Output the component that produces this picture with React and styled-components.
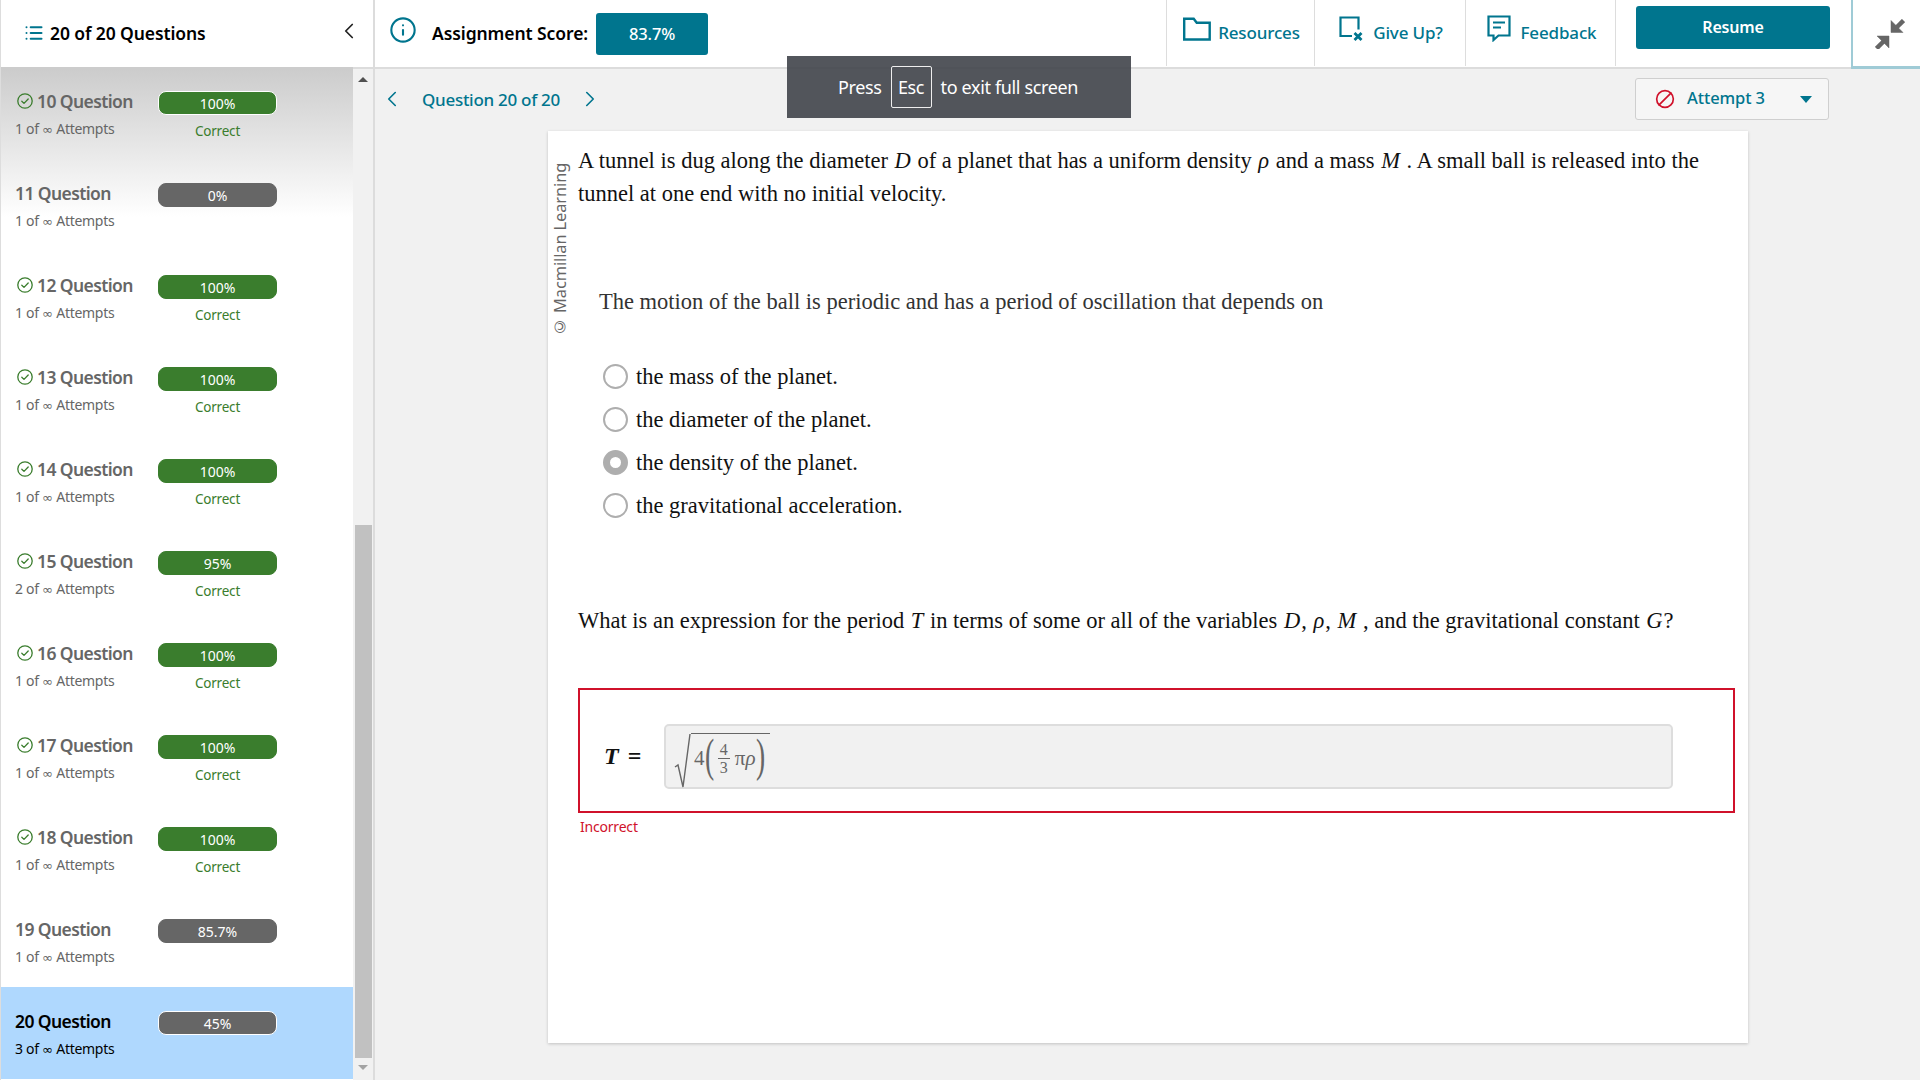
import React from 'react';
import styled, { createGlobalStyle } from 'styled-components';
import { ChevronLeft, ChevronRight, Info, List, Ban } from 'lucide-react';

const teal = '#00758e';
const ui = '"Noto Sans", "Open Sans", sans-serif';
const serif = '"Liberation Serif", "Times New Roman", serif';

const Global = createGlobalStyle`
  html, body { margin: 0; padding: 0; background: #f1f1f1; }
  body { font-family: ${ui}; }
  * { box-sizing: border-box; }
`;

const Page = styled.div`
  width: 1920px; height: 1080px; display: flex; flex-direction: column;
  overflow: hidden; position: relative; background: #f1f1f1;
`;
const TopBar = styled.header`
  height: 69px; flex: none; display: flex; background: #fff; border-bottom: 2px solid #dcdcdc;
`;
const SideHead = styled.div`
  width: 375px; flex: none; display: flex; align-items: center; padding: 0 11px 2px 23px;
  border-left: 1px solid #ddd; border-right: 2px solid #dcdcdc;
  color: #000; font-size: 17.5px; font-weight: 600; letter-spacing: -0.1px;
  svg { color: ${teal}; margin-right: 6px; }
`;
const CollapseIcon = styled(ChevronLeft)`
  && { color: #222; margin: -4px 0 0 auto; }
`;
const ScoreArea = styled.div`
  display: flex; align-items: center; padding: 0 0 2px 14px; flex: 1;
  font-size: 17.5px; font-weight: 600; letter-spacing: -0.08px; color: #000;
`;
const InfoIcon = styled(Info)`
  color: ${teal}; margin: -5px 15px 0 0;
`;
const ScoreBadge = styled.div`
  width: 112px; height: 42px; margin: 2px 0 0 8px; border-radius: 3px; background: ${teal}; color: #fff;
  display: flex; align-items: center; justify-content: center; font-size: 16.5px; font-weight: 500;
`;
const Action = styled.div`
  height: 66px; display: flex; align-items: center; gap: ${p => p.$gap || 7}px; justify-content: center;
  width: ${p => p.$w}px; border-left: 1px solid #ddd; color: ${teal}; padding: 0 0 2px 2px;
  font-size: 17px; font-weight: 500; letter-spacing: -0.15px;
`;
const ResumeWrap = styled.div`
  width: 236px; height: 66px; display: flex; flex: none; border-left: 1px solid #ddd; padding: 6px 0 0 20px;
`;
const ResumeBtn = styled.div`
  width: 194px; height: 43px; border-radius: 3px; background: ${teal}; color: #fff; padding-bottom: 2px;
  display: flex; align-items: center; justify-content: center; font-size: 16px; font-weight: 600; letter-spacing: -0.2px;
`;
const ExitBtn = styled.div`
  width: 69px; flex: none; height: 69px; background: #fff; border-left: 2px solid #9fcbd6; border-bottom: 3px solid #9fcbd6;
  display: flex; align-items: center; justify-content: center; padding: 2px 0 0 6px;
`;
const Body = styled.div`
  flex: 1; display: flex; min-height: 0;
`;
const Sidebar = styled.aside`
  width: 375px; flex: none; display: flex; background: #f1f1f1;
  border-left: 1px solid #ddd; border-right: 2px solid #dcdcdc;
`;
const RowList = styled.div`
  width: 352px; flex: none; margin-top: -2px; background: linear-gradient(#cccccc 2px, #ffffff 150px);
`;
const Row = styled.div`
  height: 92px; display: grid; grid-template-columns: 143px 119px; padding: 22px 0 0 14px;
  background: ${p => p.$active ? '#afd8fe' : 'transparent'};
`;
const Name = styled.div`
  font-size: 17.5px; font-weight: 600; line-height: 24px; letter-spacing: -0.6px;
  color: ${p => p.$active ? '#000' : '#666'}; display: flex; align-items: center; gap: 4px; white-space: nowrap;
  margin-left: ${p => p.$ok ? 2 : 0}px;
`;
const Attempts = styled.div`
  font-size: 14px; line-height: 20px; margin-top: 6px; letter-spacing: -0.3px;
  color: ${p => p.$active ? '#000' : '#666'}; white-space: nowrap;
`;
const Infinity = styled.span`
  font-family: "DejaVu Sans", sans-serif; font-size: 13px; letter-spacing: 0;
`;
const Pill = styled.div`
  width: 119px; height: 24px; border-radius: 8px; margin-top: 2px; color: #fff; background: ${p => p.$bg};
  border: 1px solid ${p => p.$ring ? '#fff' : p.$bg};
  font-size: 14px; line-height: 23px; text-align: center;
`;
const Status = styled.div`
  color: #3a7d2d; font-size: 13.5px; line-height: 20px; text-align: center; margin-top: 6px; letter-spacing: -0.2px;
`;
const Track = styled.div`
  flex: 1; display: flex; flex-direction: column; align-items: center; padding-top: 8px;
`;
const Arrow = styled.div`
  width: 0; height: 0; border-left: 5px solid transparent; border-right: 5px solid transparent;
  ${p => p.$up ? 'border-bottom: 5px solid #505050;' : 'border-top: 5px solid #a3a3a3;'}
`;
const Thumb = styled.div`
  width: 17px; height: 533px; margin: 443px 0 7px; background: #c1c1c1;
`;
const Main = styled.main`
  flex: 1; padding: 9px 91px 0 0; display: flex; flex-direction: column; min-width: 0;
`;
const SubBar = styled.div`
  height: 42px; display: flex; align-items: center; justify-content: space-between; padding-left: 4px;
`;
const QNav = styled.div`
  display: flex; align-items: center; color: ${teal}; font-size: 17px; font-weight: 500; letter-spacing: -0.28px;
  span { margin: 0 17px 0 17px; }
`;
const Attempt = styled.div`
  width: 194px; height: 42px; border: 1px solid #cfcfcf; border-radius: 3px; background: #f6f6f6; display: flex; align-items: center;
  padding: 0 16px 3px 19px; color: ${teal}; font-size: 16.5px; font-weight: 500; letter-spacing: -0.1px;
  svg { color: #d0112b; margin: 3px 12px 0 0; transform: scaleX(-1); }
`;
const Caret = styled.i`
  margin: 3px 0 0 auto; width: 0; height: 0; border-left: 6px solid transparent; border-right: 6px solid transparent; border-top: 7px solid ${teal};
`;
const Card = styled.article`
  position: relative; width: 1200px; height: 912px; margin: 11px 0 0 173px; background: #fff;
  box-shadow: 0 1px 3px rgba(0,0,0,.2); padding: 13px 12px 0 30px;
  font-family: ${serif}; font-size: 22.5px; line-height: 33px; color: #111;
`;
const Stamp = styled.div`
  position: absolute; left: 3px; top: 29px; height: 175px; writing-mode: vertical-rl; transform: rotate(180deg);
  font-family: ${ui}; font-size: 16.4px; line-height: 18px; color: #666; white-space: nowrap; text-align: left; letter-spacing: -0.1px;
`;
const CopySign = styled.span`
  font-family: "DejaVu Sans", sans-serif; font-size: 15px;
`;
const Para = styled.p`
  margin: 0;
`;
const Var = styled.i`
  font-style: italic; margin: 0 1px;
`;
const Lead = styled.p`
  margin: 75px 0 0 21px; color: #333;
`;
const Options = styled.div`
  margin: 42px 0 0 25px; display: flex; flex-direction: column; gap: 10px;
`;
const Option = styled.label`
  display: flex; align-items: center; gap: 8px; height: 33px;
`;
const Radio = styled.span`
  width: 25px; height: 25px; border-radius: 50%; flex: none; background: #fff;
  border: ${p => p.$on ? '7.5px solid #aeaeae' : '2px solid #aeaeae'};
`;
const Question = styled.p`
  margin: 82px 0 0;
`;
const AnswerBox = styled.div`
  margin-top: 51px; width: 1157px; height: 125px; border: 2px solid #d0112b; display: flex; align-items: center; padding: 12px 0 0 25px;
`;
const Lhs = styled.div`
  width: 60px; font-weight: 700; font-size: 24px; flex: none; word-spacing: 3px; margin-left: -1px;
  i { font-style: italic; }
`;
const Input = styled.div`
  width: 1009px; height: 65px; background: #f1f1f1; border: 2px solid #ddd; border-radius: 5px;
  display: flex; align-items: flex-start; padding: 7px 0 0 8px; color: #666; font-size: 20px;
`;
const Surd = styled.svg`
  width: 17px; height: 56px; flex: none; margin-top: 0;
`;
const Radicand = styled.div`
  border-top: 1px solid #666; height: 50px; display: flex; align-items: center; padding: 0 5px 0 3px;
  font-size: 21px; line-height: 1;
  i { font-style: italic; }
`;
const Paren = styled.span`
  font-size: 46px; font-weight: 300; transform: scaleX(.6); line-height: 1; margin: -6px -3px 0;
`;
const Frac = styled.span`
  display: inline-flex; flex-direction: column; align-items: center; font-size: 16px; line-height: 17px; margin: 0 5px 0 4px;
  b { font-weight: 400; border-bottom: 1px solid #666; padding: 0 2px; }
`;
const Verdict = styled.div`
  font-family: ${ui}; font-size: 14px; line-height: 20px; color: #d0112b; margin: 4px 0 0 2px; letter-spacing: -0.2px;
`;
const Toast = styled.div`
  position: absolute; left: 787px; top: 56px; width: 344px; height: 62px; background: rgba(64,68,74,.9);
  color: #fff; display: flex; align-items: center; justify-content: center; font-size: 18px; letter-spacing: -0.35px; padding-right: 2px;
`;
const Kbd = styled.span`
  height: 42px; width: 41px; margin: 0 9px; border: 1px solid #eee; border-radius: 2px; display: flex; align-items: center; justify-content: center;
`;

const Check = () => (
  <svg width="16" height="16" viewBox="0 0 16 16" fill="none" stroke="#3a7d2d" strokeWidth="1.3">
    <circle cx="8" cy="8" r="7.2" />
    <path d="M4.8 8.2l2.2 2.2 4.2-4.4" strokeLinecap="round" strokeLinejoin="round" />
  </svg>
);
const FolderIcon = () => (
  <svg width="28" height="24" viewBox="0 0 28 24" fill="none" stroke={teal} strokeWidth="2.4" style={{marginTop: -6}}>
    <path d="M1.200 22.500V1.800h9.500l3 4h13v16.700z" />
  </svg>
);
const GiveUpIcon = () => (
  <svg width="25" height="26" viewBox="0 0 25 26" fill="none" stroke={teal} strokeWidth="2.2" style={{marginTop: -6}}>
    <path d="M13 20H1.500V1.500h18v12" />
    <path d="M15.500 17l7 7m0-7l-7 7" strokeWidth="2.8" />
  </svg>
);
const FeedbackIcon = () => (
  <svg width="24" height="27" viewBox="0 0 24 27" fill="none" stroke={teal} strokeWidth="2.200" style={{marginTop: -8}}>
    <path d="M1.500 1.500h21v19H11.500l-5 4.500v-4.500h-5z" />
    <path d="M6 7.500h12M6 12.500h8" />
  </svg>
);
const CompressIcon = () => (
  <svg width="30" height="30" viewBox="0 0 30 30" fill="#666" stroke="#666">
    <path d="M16 1.500V13.500H28z" strokeWidth="0.5" />
    <path d="M21 9L28.500 1.500" strokeWidth="4.500" />
    <path d="M2 17H14V29z" strokeWidth="0.5" />
    <path d="M9 22L1.500 29.500" strokeWidth="4.500" />
  </svg>
);

const rows = [
  { n: 10, a: 1, pct: '100%', ok: true, ring: true },
  { n: 11, a: 1, pct: '0%' },
  { n: 12, a: 1, pct: '100%', ok: true },
  { n: 13, a: 1, pct: '100%', ok: true },
  { n: 14, a: 1, pct: '100%', ok: true },
  { n: 15, a: 2, pct: '95%', ok: true },
  { n: 16, a: 1, pct: '100%', ok: true },
  { n: 17, a: 1, pct: '100%', ok: true },
  { n: 18, a: 1, pct: '100%', ok: true },
  { n: 19, a: 1, pct: '85.7%' },
  { n: 20, a: 3, pct: '45%', active: true, ring: true },
];

export default function App() {
  return (
    <Page>
      <Global />
      <TopBar>
        <SideHead>
          <List size={20} strokeWidth={2.4} />
          20 of 20 Questions
          <CollapseIcon size={26} strokeWidth={1.6} />
        </SideHead>
        <ScoreArea>
          <InfoIcon size={28} strokeWidth={1.8} />
          Assignment Score:
          <ScoreBadge>83.7%</ScoreBadge>
        </ScoreArea>
        <Action $w={148}><FolderIcon />Resources</Action>
        <Action $w={151} $gap={9}><GiveUpIcon />Give Up?</Action>
        <Action $w={150} $gap={10}><FeedbackIcon />Feedback</Action>
        <ResumeWrap><ResumeBtn>Resume</ResumeBtn></ResumeWrap>
        <ExitBtn><CompressIcon /></ExitBtn>
      </TopBar>
      <Body>
        <Sidebar>
          <RowList>
            {rows.map(r => (
              <Row key={r.n} $active={r.active}>
                <div>
                  <Name $active={r.active} $ok={r.ok}>{r.ok && <Check />}{r.n} Question</Name>
                  <Attempts $active={r.active}>{r.a} of <Infinity>∞</Infinity> Attempts</Attempts>
                </div>
                <div>
                  <Pill $bg={r.ok ? '#3a7d2d' : '#666'} $ring={r.ring}>{r.pct}</Pill>
                  {r.ok && <Status>Correct</Status>}
                </div>
              </Row>
            ))}
          </RowList>
          <Track>
            <Arrow $up />
            <Thumb />
            <Arrow />
          </Track>
        </Sidebar>
        <Main>
          <SubBar>
            <QNav>
              <ChevronLeft size={26} strokeWidth={1.5} />
              <span>Question 20 of 20</span>
              <ChevronRight size={26} strokeWidth={1.5} />
            </QNav>
            <Attempt>
              <Ban size={20} strokeWidth={2} />
              Attempt 3
              <Caret />
            </Attempt>
          </SubBar>
          <Card>
            <Stamp><CopySign>©</CopySign> Macmillan Learning</Stamp>
            <Para>A tunnel is dug along the diameter <Var>D</Var> of a planet that has a uniform density <Var>ρ</Var> and a mass <Var>M</Var> . A small ball is released into the tunnel at one end with no initial velocity.</Para>
            <Lead>The motion of the ball is periodic and has a period of oscillation that depends on</Lead>
            <Options>
              <Option><Radio />the mass of the planet.</Option>
              <Option><Radio />the diameter of the planet.</Option>
              <Option><Radio $on />the density of the planet.</Option>
              <Option><Radio />the gravitational acceleration.</Option>
            </Options>
            <Question>What is an expression for the period <Var>T</Var> in terms of some or all of the variables <Var>D</Var>, <Var>ρ</Var>, <Var>M</Var> , and the gravitational constant <Var>G</Var>?</Question>
            <AnswerBox>
              <Lhs><i>T</i> =</Lhs>
              <Input>
                <Surd viewBox="0 0 17 56" fill="none" stroke="#666">
                  <path d="M1 34l3-2 5 22L16 1" strokeWidth="1.4" />
                </Surd>
                <Radicand>
                  4<Paren>(</Paren>
                  <Frac><b>4</b><span>3</span></Frac>
                  π<i>ρ</i>
                  <Paren>)</Paren>
                </Radicand>
              </Input>
            </AnswerBox>
            <Verdict>Incorrect</Verdict>
          </Card>
        </Main>
      </Body>
      <Toast>Press<Kbd>Esc</Kbd>to exit full screen</Toast>
    </Page>
  );
}
